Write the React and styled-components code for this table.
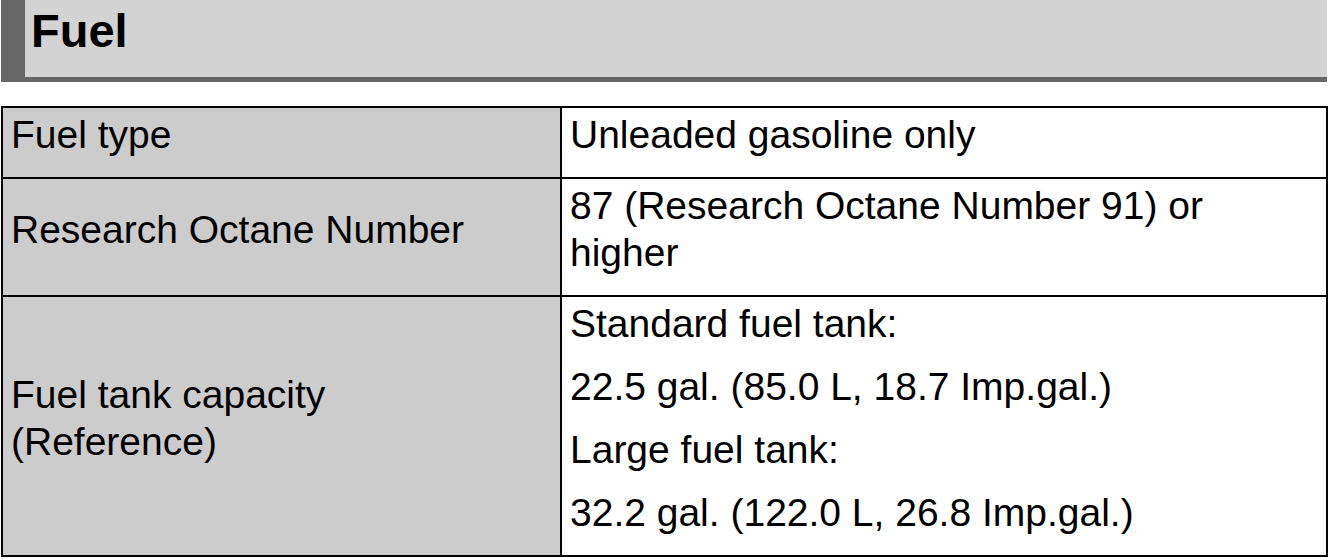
import React from "react";
import styled, { createGlobalStyle } from "styled-components";

const GlobalStyle = createGlobalStyle`
  html, body {
    margin: 0;
    padding: 0;
    background: #ffffff;
  }
  body {
    font-family: "Liberation Sans", Arial, sans-serif;
    color: #000000;
  }
`;

const Page = styled.div`
  display: flex;
  flex-direction: column;
  padding-left: 1px;
  width: 1327px;
`;

const SectionHeader = styled.h1`
  box-sizing: border-box;
  margin: 0;
  width: 1326px;
  height: 82px;
  background: #d3d3d3;
  border-left: 24px solid #666666;
  border-bottom: 5px solid #666666;
  padding: 7px 0 0 6px;
  font-family: "Liberation Sans", Arial, sans-serif;
  font-weight: 700;
  font-size: 47px;
  line-height: 47px;
`;

const SpecTable = styled.div`
  margin-top: 24px;
  display: grid;
  grid-template-columns: 559px 1fr;
  border: 2px solid #000000;
  width: 1327px;
  box-sizing: border-box;
`;

const Cell = styled.div`
  box-sizing: border-box;
  padding: 3px 8px 19px 8px;
  font-size: 39px;
  line-height: 47px;
  border-top: ${(p) => (p.$first ? "none" : "2px solid #000000")};
  display: flex;
  flex-direction: column;
  gap: 16px;
  justify-content: ${(p) => (p.$label ? "center" : "flex-start")};
  background: ${(p) => (p.$label ? "#cccccc" : "#ffffff")};
  border-right: ${(p) => (p.$label ? "2px solid #000000" : "none")};
`;

const Line = styled.span`
  display: block;
`;

const rows = [
  { label: ["Fuel type"], values: ["Unleaded gasoline only"] },
  {
    label: ["Research Octane Number"],
    values: ["87 (Research Octane Number 91) or higher"],
  },
  {
    label: ["Fuel tank capacity", "(Reference)"],
    values: [
      "Standard fuel tank:",
      "22.5 gal. (85.0 L, 18.7 Imp.gal.)",
      "Large fuel tank:",
      "32.2 gal. (122.0 L, 26.8 Imp.gal.)",
    ],
  },
];

export default function App() {
  return (
    <>
      <GlobalStyle />
      <Page>
        <SectionHeader>Fuel</SectionHeader>
        <SpecTable>
          {rows.map((row, i) => (
            <React.Fragment key={row.label[0]}>
              <Cell $label $first={i === 0}>
                <Line>
                  {row.label.map((t, j) => (
                    <React.Fragment key={t}>
                      {j > 0 && <br />}
                      {t}
                    </React.Fragment>
                  ))}
                </Line>
              </Cell>
              <Cell $first={i === 0}>
                {row.values.map((v) => (
                  <Line key={v}>{v}</Line>
                ))}
              </Cell>
            </React.Fragment>
          ))}
        </SpecTable>
      </Page>
    </>
  );
}
